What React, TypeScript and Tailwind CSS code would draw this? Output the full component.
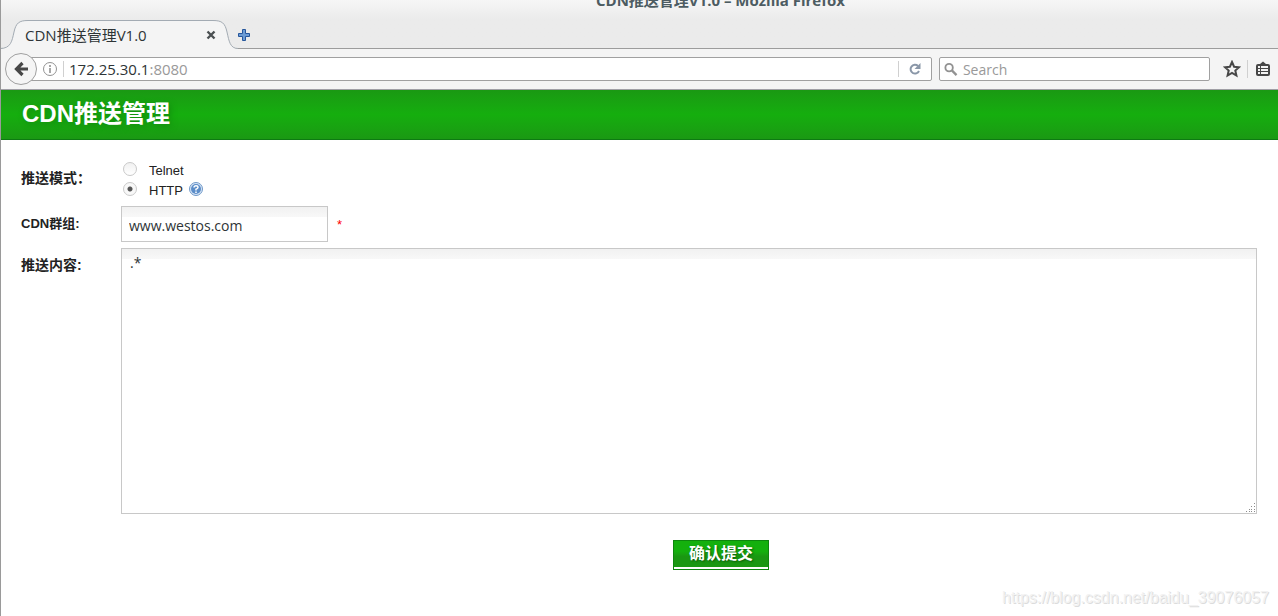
import React, { useState } from "react";

const TabStrip: React.FC = () => (
    <div className="relative flex h-[49px] items-end border-b border-[#9c9c9c] bg-linear-to-b from-[#f6f6f6] to-[#ebebeb] to-40%">
        <h1 className="absolute inset-x-0 -top-[10px] pl-[162px] text-center font-['Open_Sans','Noto_Sans_CJK_SC',sans-serif] text-[15px] leading-5 font-bold text-[#4d5c62]">
            CDN推送管理V1.0 – Mozilla Firefox
        </h1>
        <div className="relative -mb-px h-[30px] w-[237px]">
            <svg className="absolute inset-0" width="237" height="30" viewBox="1 0 237 30" fill="none">
                <path
                    d="M0 29.5C11 29.5 12 22 14 13C16 4 19 1.5 28 1.5H213C222 1.5 225 4 227 13C229 22 230 29.5 238 29.5V30H0Z"
                    fill="#f4f4f4"
                />
                <path
                    d="M0 29.5C11 29.5 12 22 14 13C16 4 19 1.5 28 1.5H213C222 1.5 225 4 227 13C229 22 230 29.5 238 29.5"
                    stroke="#a3abb3"
                />
            </svg>
            <div className="relative flex h-full items-center justify-between pt-[2px] pr-[22px] pl-6">
                <span className="text-[15px] leading-5 text-[#2e3436]">CDN推送管理V1.0</span>
                <button aria-label="Close tab" className="block">
                    <svg width="10" height="10" viewBox="0 0 10 10" stroke="#4b5052" strokeWidth="2.4">
                        <path d="M1.5 1.5L8.5 8.5M8.5 1.5L1.5 8.5" />
                    </svg>
                </button>
            </div>
        </div>
        <button aria-label="New tab" className="mb-[7px]">
            <svg width="12" height="12" viewBox="0 0 12 12">
                <path
                    d="M4.5 .5H7.5V4.5H11.5V7.5H7.5V11.5H4.5V7.5H.5V4.5H4.5Z"
                    fill="#6b9bd4"
                    stroke="#26569b"
                />
            </svg>
        </button>
    </div>
);

const NavBar: React.FC = () => {
    const [query, setQuery] = useState<string>("");

    return (
        <div className="flex h-[41px] items-center border-b border-[#a09fa5] bg-[#f4f4f4] pr-2 pl-1">
            <button
                aria-label="Back"
                className="relative z-10 flex size-8 shrink-0 items-center justify-center rounded-full border border-[#a0a0a0] bg-[#f5f5f5]"
            >
                <svg width="16" height="16" viewBox="0 0 16 16" fill="none" stroke="#474747" strokeWidth="3.2">
                    <path d="M9.5 2L3.5 8L9.5 14M3.5 8H15" />
                </svg>
            </button>
            <div className="-ml-2 flex h-6 flex-1 items-center rounded-r-xs border border-[#a0a0a0] bg-white pl-3">
                <svg width="16" height="16" viewBox="0 0 16 16" fill="none" stroke="#929292">
                    <circle cx="8" cy="8" r="6.5" />
                    <path d="M8 7V12M8 4V6" strokeWidth="1.6" />
                </svg>
                <div className="mr-[5px] ml-[5px] h-4 w-px bg-[#d0d0d0]" />
                <div className="flex-1 text-[15px] leading-5 text-[#2e3436]">
                    172.25.30.1<span className="text-[#999]">:8080</span>
                </div>
                <button aria-label="Reload" className="flex h-4 w-[33px] items-center justify-center border-l border-[#d0d0d0]">
                    <svg width="14" height="14" viewBox="0 0 14 14" fill="none">
                        <path d="M10 4A4.4 4.4 0 1 0 11 9" stroke="#8a97a8" strokeWidth="2" />
                        <path d="M12.5 1V7H6.5Z" fill="#8a97a8" />
                    </svg>
                </button>
            </div>
            <label className="ml-[7px] flex h-6 w-[271px] items-center rounded-xs border border-[#a0a0a0] bg-white px-1">
                <svg width="15" height="15" viewBox="0 0 15 15" fill="none" stroke="#929292">
                    <circle cx="5.5" cy="5.5" r="4" strokeWidth="2" />
                    <path d="M8.5 8.5L13.5 13.5" strokeWidth="2.5" />
                </svg>
                <input
                    type="text"
                    aria-label="Search"
                    placeholder="Search"
                    value={query}
                    onChange={(e) => setQuery(e.target.value)}
                    className="ml-[5px] w-full pt-[2px] text-[14px] leading-5 outline-none placeholder:text-[#999]"
                />
            </label>
            <button aria-label="Bookmark" className="ml-[13px]">
                <svg width="18" height="18" viewBox="0 0 18 18" fill="none" stroke="#474747" strokeWidth="2">
                    <path d="M9 2L11.1 6.7L16 7.2L12.3 10.5L13.4 15.5L9 12.9L4.6 15.5L5.7 10.5L2 7.2L6.9 6.7Z" />
                </svg>
            </button>
            <div className="mr-2 ml-[6px] h-[18px] w-px bg-[#d0d0d0]" />
            <button aria-label="Library">
                <svg width="14" height="16" viewBox="0 0 14 16">
                    <path
                        d="M4 3L7 .5L10 3H12Q14 3 14 5V13Q14 15 12 15H2Q0 15 0 13V5Q0 3 2 3Z"
                        fill="#474747"
                    />
                    <path d="M2 6H4M5 6H12M2 9H4M5 9H12M2 12H4M5 12H12" stroke="#f4f4f4" strokeWidth="2" />
                </svg>
            </button>
        </div>
    );
};

const HelpIcon: React.FC = () => (
    <svg width="14" height="14" viewBox="0 0 14 14" fill="none">
        <circle cx="7" cy="7" r="6.5" fill="#d9e6f5" stroke="#6f98c8" />
        <circle cx="7" cy="7" r="5" fill="#5b8dc9" />
        <path d="M5 5.5Q5 3.8 7 3.8T9 5.5Q9 6.5 7 7.2V8.5M7 9.4V11" stroke="#fff" strokeWidth="1.5" />
    </svg>
);

// dotted resize corner of the textarea
const ResizeGrip: React.FC = () => (
    <svg className="pointer-events-none absolute right-px bottom-px bg-white" width="14" height="14" viewBox="0 0 14 14">
        <path
            d="M12 4h1v1h-1zM9 7h1v1h-1zM12 7h1v1h-1zM7 10h1v1h-1zM9 10h1v1h-1zM12 10h1v1h-1zM4 12h1v1h-1zM7 12h1v1h-1zM9 12h1v1h-1zM12 12h1v1h-1z"
            fill="#8c8c8c"
        />
    </svg>
);

const modes = ["Telnet", "HTTP"];

const radioClass =
    "size-[14px] appearance-none rounded-full border border-[#c9c9c9] bg-linear-to-b from-[#f1f1f1] to-white checked:bg-[radial-gradient(circle,#555_0_2px,#f8f8f8_3px)]";

const fieldClass =
    "border border-[#c8c8c8] bg-[linear-gradient(#f1f1f1,#f8f8f8_10px,#fff_10px)] outline-none text-[#2e3436] font-['Open_Sans',sans-serif] text-[14px]";

const PushForm: React.FC = () => {
    const [mode, setMode] = useState<string>("HTTP");
    const [group, setGroup] = useState<string>("www.westos.com");
    const [content, setContent] = useState<string>(".*");

    return (
        <form
            onSubmit={(e) => e.preventDefault()}
            className="grid grid-cols-[100px_1fr] gap-y-[6px] pt-5 pr-[21px] pl-5 font-['Liberation_Sans','Noto_Sans_CJK_SC',sans-serif] text-[13px] leading-5 text-[#222]"
        >
            <div id="mode-label" className="pt-2 text-[14px] leading-5 font-bold">推送模式：</div>
            <div role="radiogroup" aria-labelledby="mode-label" className="-mt-px flex h-[41px] flex-col">
                {modes.map((name) => (
                    <div key={name} className="flex h-5 items-center pl-[2px]">
                        <label className="flex items-center gap-3">
                            <input
                                type="radio"
                                name="mode"
                                checked={mode === name}
                                onChange={() => setMode(name)}
                                className={radioClass}
                            />
                            <span className="pt-[3px]">{name}</span>
                        </label>
                        {name === "HTTP" && <button type="button" aria-label="Help" className="ml-[6px]"><HelpIcon /></button>}
                    </div>
                ))}
            </div>

            <label htmlFor="group" className="pt-2 font-bold">CDN群组:</label>
            <div className="flex items-center gap-[9px]">
                <input
                    id="group"
                    type="text"
                    value={group}
                    onChange={(e) => setGroup(e.target.value)}
                    className={`${fieldClass} h-9 w-[207px] px-[7px] pt-[2px]`}
                />
                <span className="pt-[2px] text-[#f00]">*</span>
            </div>

            <label htmlFor="content" className="pt-[7px] text-[14px] leading-5 font-bold">推送内容:</label>
            <div className="relative">
                <textarea
                    id="content"
                    value={content}
                    onChange={(e) => setContent(e.target.value)}
                    className={`${fieldClass} block h-[266px] w-full px-2 py-1`}
                />
                <ResizeGrip />
            </div>

            <div className="col-start-2 flex justify-center pt-5 pl-16">
                <button
                    type="submit"
                    className="h-[30px] w-24 border border-[#0d860d] bg-white pb-[2px]"
                >
                    <span className="flex h-full items-center justify-center bg-linear-to-b from-[#14b00d] from-40% to-[#1a9712] to-60% text-[16px] font-bold text-white text-shadow-[1px_1px_2px_#0a5c08]">
                        确认提交
                    </span>
                </button>
            </div>
        </form>
    );
};

const App: React.FC = () => {
    return (
        <div className="min-h-screen bg-white font-['Open_Sans','Noto_Sans_CJK_SC',sans-serif]">
            <div className="relative min-h-screen border-l border-[#9a9a9a]">
                <TabStrip />
                <NavBar />
                <header className="flex h-[50px] items-center border-b border-[#0d7a12] bg-linear-to-b from-[#1a9913] via-[#15ae0e] to-[#1a9913] px-[21px] pb-[2px]">
                    <h2 className="font-['Liberation_Sans','Noto_Sans_CJK_SC',sans-serif] text-[24px] leading-8 font-bold text-white text-shadow-[2px_2px_6px_#128a0e]">
                        CDN推送管理
                    </h2>
                </header>
                <PushForm />
                <div className="absolute right-[9px] bottom-2 font-['Liberation_Sans',sans-serif] text-[16px] leading-5 text-[#f2f2f2] text-shadow-[1px_1px_0_#dcdcdc]">
                    https://blog.csdn.net/baidu_39076057
                </div>
            </div>
        </div>
    );
};

export default App;
